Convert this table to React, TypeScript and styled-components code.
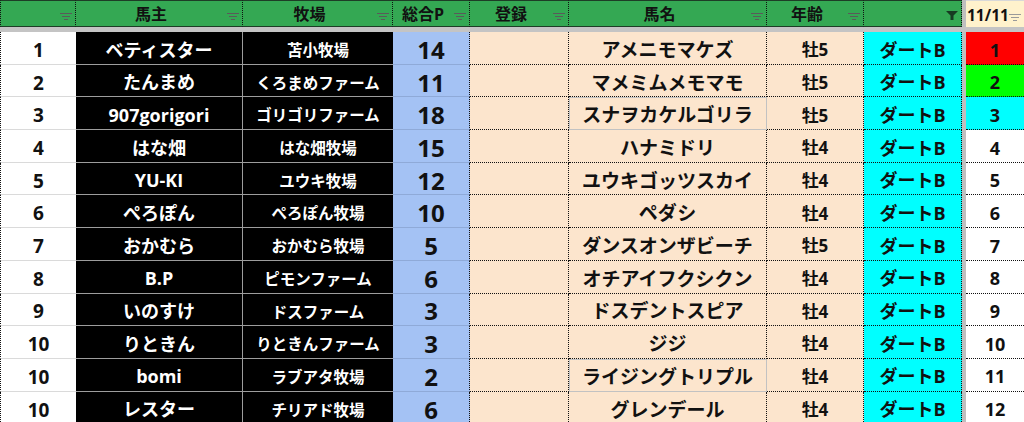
import React from "react";
import styled, { createGlobalStyle, css } from "styled-components";

const GlobalStyle = createGlobalStyle`
  html, body {
    margin: 0;
    padding: 0;
    background: #ffffff;
    overflow: hidden;
  }
  body {
    font-family: "Open Sans", "Noto Sans CJK JP", sans-serif;
  }
`;

type Kind =
  | "rank"
  | "owner"
  | "farm"
  | "point"
  | "entry"
  | "horse"
  | "age"
  | "course"
  | "gap"
  | "order";

type RowData = {
  rank: string;
  owner: string;
  farm: string;
  point: string;
  horse: string;
  age: string;
  order: string;
  orderBg?: string;
  plain?: boolean;
};

const rows: RowData[] = [
  { rank: "1", owner: "ベティスター", farm: "苫小牧場", point: "14", horse: "アメニモマケズ", age: "牡5", order: "1", orderBg: "#ff0000" },
  { rank: "2", owner: "たんまめ", farm: "くろまめファーム", point: "11", horse: "マメミムメモマモ", age: "牡5", order: "2", orderBg: "#00ff00" },
  { rank: "3", owner: "907gorigori", farm: "ゴリゴリファーム", point: "18", horse: "スナヲカケルゴリラ", age: "牡5", order: "3", orderBg: "#00ffff", plain: true },
  { rank: "4", owner: "はな畑", farm: "はな畑牧場", point: "15", horse: "ハナミドリ", age: "牡4", order: "4" },
  { rank: "5", owner: "YU-KI", farm: "ユウキ牧場", point: "12", horse: "ユウキゴッツスカイ", age: "牡4", order: "5" },
  { rank: "6", owner: "ぺろぽん", farm: "ぺろぽん牧場", point: "10", horse: "ペダシ", age: "牡4", order: "6" },
  { rank: "7", owner: "おかむら", farm: "おかむら牧場", point: "5", horse: "ダンスオンザビーチ", age: "牡5", order: "7" },
  { rank: "8", owner: "B.P", farm: "ピモンファーム", point: "6", horse: "オチアイフクシクン", age: "牡4", order: "8" },
  { rank: "9", owner: "いのすけ", farm: "ドスファーム", point: "3", horse: "ドスデントスピア", age: "牡4", order: "9" },
  { rank: "10", owner: "りときん", farm: "りときんファーム", point: "3", horse: "ジジ", age: "牡4", order: "10" },
  { rank: "10", owner: "bomi", farm: "ラブアタ牧場", point: "2", horse: "ライジングトリプル", age: "牡4", order: "11", plain: true },
  { rank: "10", owner: "レスター", farm: "チリアド牧場", point: "6", horse: "グレンデール", age: "牡4", order: "12" },
];

const Sheet = styled.div`
  display: grid;
  grid-template-columns: 76px 167px 150px 77px 99px 198px 97px 98px 4px 58px;
  grid-template-rows: 27px 5px;
  grid-auto-rows: 32.7px;
  width: 1024px;
  height: 422px;
  overflow: hidden;
`;

const HeadCell = styled.div<{ $first?: boolean; $cream?: boolean; $gap?: boolean }>`
  position: relative;
  box-sizing: border-box;
  display: flex;
  align-items: center;
  justify-content: center;
  padding: 2px 16px 0 0;
  font-size: 16px;
  font-weight: 700;
  color: #111;
  line-height: 1.2;
  white-space: nowrap;
  background: #34a853;
  border-top: 1px solid #1d3d26;
  border-bottom: 1px solid #1d3d26;
  border-right: 1px dotted #111;
  ${(p) =>
    p.$first &&
    css`
      border-left: 1px dotted #111;
    `}
  ${(p) =>
    p.$cream &&
    css`
      background: #fff2cc;
      justify-content: flex-start;
      padding: 2px 0 0 1px;
      font-size: 15.5px;
      border-top: 1px solid #d8d8d8;
      border-bottom: none;
      border-right: none;
    `}
  ${(p) =>
    p.$gap &&
    css`
      background: #bfbfbf;
      border: none;
      padding: 0;
    `}
`;

const IconSlot = styled.span`
  position: absolute;
  right: 3px;
  bottom: 6px;
  display: flex;
`;

const Band = styled.div`
  grid-column: 1 / -1;
  background: #c4c4c4;
`;

const kindStyles: Record<Kind, ReturnType<typeof css>> = {
  rank: css`
    background: #ffffff;
    color: #111;
    font-size: 19px;
    border-left: 1px dotted #111;
    border-bottom: 1px solid #dadada;
  `,
  owner: css`
    background: #000000;
    color: #ffffff;
    font-size: 18px;
    border-bottom: 1px solid #9d9d9d;
    border-right: 1px solid #9d9d9d;
  `,
  farm: css`
    background: #000000;
    color: #ffffff;
    font-size: 15.5px;
    border-bottom: 1px solid #9d9d9d;
  `,
  point: css`
    background: #a4c2f4;
    color: #111;
    font-size: 24px;
    border-bottom: 1px solid #8faad8;
    border-right: 1px dotted #111;
  `,
  entry: css`
    background: #fce5cd;
    border-bottom: 1px dotted #111;
    border-right: 1px dotted #111;
  `,
  horse: css`
    background: #fce5cd;
    color: #111;
    font-size: 19px;
    border-bottom: 1px dotted #111;
    border-right: 1px dotted #111;
  `,
  age: css`
    background: #fce5cd;
    color: #111;
    font-size: 17px;
    border-bottom: 1px dotted #111;
    border-right: 1px dotted #111;
  `,
  course: css`
    background: #00ffff;
    color: #111;
    font-size: 18px;
    border-bottom: 1px dotted #111;
    border-right: 1px dotted #111;
  `,
  gap: css`
    background: #bfbfbf;
  `,
  order: css`
    background: #ffffff;
    color: #111;
    font-size: 18px;
    border-bottom: 1px dotted #111;
  `,
};

const Cell = styled.div<{ $kind: Kind; $bg?: string; $plain?: boolean }>`
  box-sizing: border-box;
  display: flex;
  align-items: center;
  justify-content: center;
  padding-top: 5px;
  font-weight: 700;
  line-height: 1.2;
  white-space: nowrap;
  ${(p) => kindStyles[p.$kind]}
  ${(p) =>
    p.$bg &&
    css`
      background: ${p.$bg};
    `}
  ${(p) =>
    p.$plain &&
    css`
      border-bottom: 1px solid #c2c2c2;
      border-right: 1px solid #c2c2c2;
      box-shadow: inset 1px 1px 0 #c2c2c2;
    `}
`;

const FilterIcon: React.FC<{ color?: string }> = ({ color = "#5a5a5a" }) => (
  <svg width="12" height="7" viewBox="0 0 12 7">
    <rect x="0" y="0" width="12" height="1" fill={color} />
    <rect x="2" y="3" width="8" height="1" fill={color} />
    <rect x="4" y="6" width="4" height="1" fill={color} />
  </svg>
);

const ActiveFilterIcon: React.FC = () => (
  <svg width="12" height="9" viewBox="0 0 12 9">
    <path d="M0 0 H12 L7.5 4.5 V9 H4.5 V4.5 Z" fill="#173a22" />
  </svg>
);

const headers = ["", "馬主", "牧場", "総合P", "登録", "馬名", "年齢", ""];

const App: React.FC = () => {
  return (
    <>
      <GlobalStyle />
      <Sheet>
        {headers.map((label, i) => (
          <HeadCell key={`h${i}`} $first={i === 0}>
            {label}
            <IconSlot>{i === 7 ? <ActiveFilterIcon /> : <FilterIcon />}</IconSlot>
          </HeadCell>
        ))}
        <HeadCell $gap />
        <HeadCell $cream>
          11/11
          <IconSlot>
            <FilterIcon color="#9a9a9a" />
          </IconSlot>
        </HeadCell>
        <Band />
        {rows.map((row, i) => (
          <React.Fragment key={i}>
            <Cell $kind="rank">{row.rank}</Cell>
            <Cell $kind="owner">{row.owner}</Cell>
            <Cell $kind="farm">{row.farm}</Cell>
            <Cell $kind="point">{row.point}</Cell>
            <Cell $kind="entry" />
            <Cell $kind="horse" $plain={row.plain}>
              {row.horse}
            </Cell>
            <Cell $kind="age">{row.age}</Cell>
            <Cell $kind="course">ダートB</Cell>
            <Cell $kind="gap" />
            <Cell $kind="order" $bg={row.orderBg}>
              {row.order}
            </Cell>
          </React.Fragment>
        ))}
      </Sheet>
    </>
  );
};

export default App;
